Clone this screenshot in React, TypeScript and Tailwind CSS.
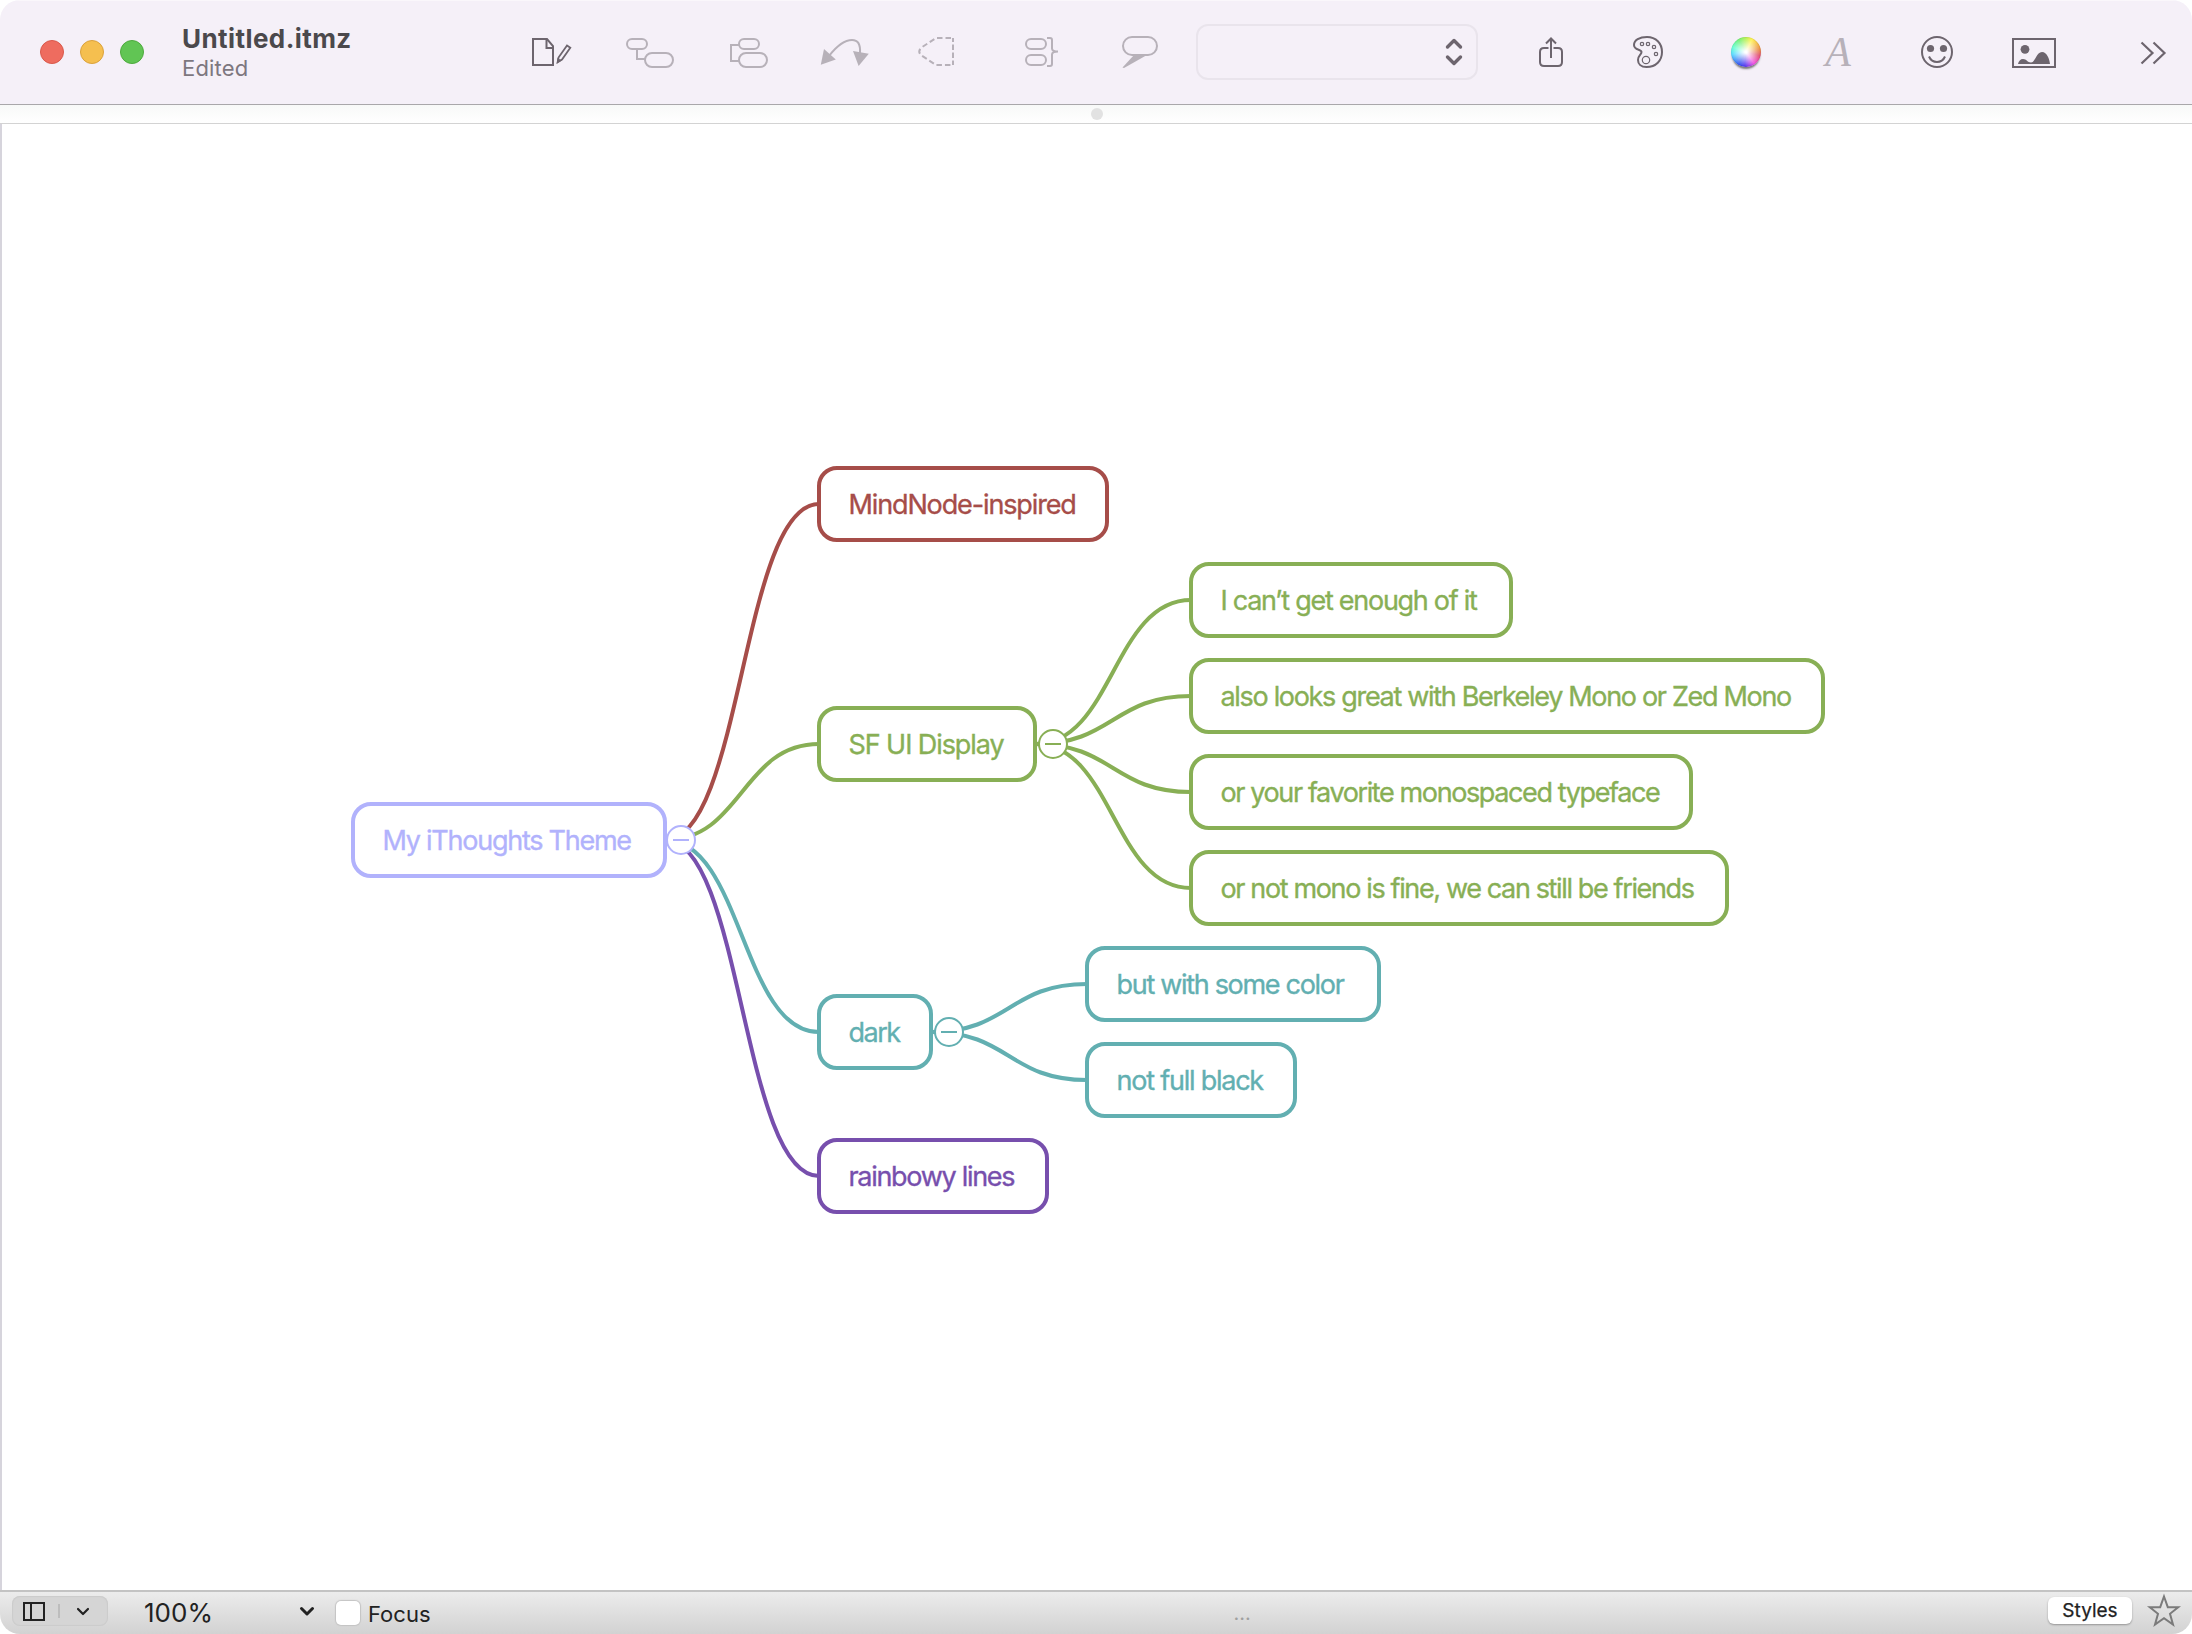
import type { ReactNode } from "react";

const STRONG = "#6d656e";
const FAINT = "#b7b1b9";

/* Mind map data; coordinates are relative to the canvas */

type MapNode = {
  label: string;
  x: number;
  y: number;
  width: number;
  color: string;
  tracking: string;
};

const LILAC = "#b1b2fc";
const RED = "#a64d49";
const GREEN = "#88af55";
const TEAL = "#62afb1";
const PURPLE = "#774fad";

const NODE_HEIGHT = 76;

const nodes: MapNode[] = [
  { label: "My iThoughts Theme", x: 351, y: 678, width: 316, color: LILAC, tracking: "tracking-[-1.25px]" },
  { label: "MindNode-inspired", x: 817, y: 342, width: 292, color: RED, tracking: "tracking-[-1.13px]" },
  { label: "SF UI Display", x: 817, y: 582, width: 220, color: GREEN, tracking: "tracking-[-1.08px]" },
  { label: "I can’t get enough of it", x: 1189, y: 438, width: 324, color: GREEN, tracking: "tracking-[-1.28px]" },
  { label: "also looks great with Berkeley Mono or Zed Mono", x: 1189, y: 534, width: 636, color: GREEN, tracking: "tracking-[-1.32px]" },
  { label: "or your favorite monospaced typeface", x: 1189, y: 630, width: 504, color: GREEN, tracking: "tracking-[-1.39px]" },
  { label: "or not mono is fine, we can still be friends", x: 1189, y: 726, width: 540, color: GREEN, tracking: "tracking-[-1.365px]" },
  { label: "dark", x: 817, y: 870, width: 116, color: TEAL, tracking: "tracking-[-1.5px]" },
  { label: "but with some color", x: 1085, y: 822, width: 296, color: TEAL, tracking: "tracking-[-1.31px]" },
  { label: "not full black", x: 1085, y: 918, width: 212, color: TEAL, tracking: "tracking-[-1.23px]" },
  { label: "rainbowy lines", x: 817, y: 1014, width: 232, color: PURPLE, tracking: "tracking-[-1.3px]" },
];

const links: [number, number][] = [
  [0, 10],
  [0, 7],
  [0, 2],
  [0, 1],
  [2, 3],
  [2, 4],
  [2, 5],
  [2, 6],
  [7, 8],
  [7, 9],
];

const toggles = [
  { x: 681, y: 716, color: LILAC },
  { x: 1053, y: 620, color: GREEN },
  { x: 949, y: 908, color: TEAL },
];

function linkPath(from: MapNode, to: MapNode) {
  const x1 = from.x + from.width - 2;
  const y1 = from.y + NODE_HEIGHT / 2;
  const x2 = to.x + 2;
  const y2 = to.y + NODE_HEIGHT / 2;
  const mid = (x1 + x2) / 2;
  return `M${x1} ${y1}C${mid} ${y1} ${mid} ${y2} ${x2} ${y2}`;
}

/* Toolbar */

function Tool({ label, x, width, children }: { label: string; x: number; width: number; children: ReactNode }) {
  return (
    <button aria-label={label} className="h-[104px] shrink-0">
      <svg width={width} height={104} viewBox={`${x} 0 ${width} 104`} fill="none" strokeWidth={2}>
        {children}
      </svg>
    </button>
  );
}

function TrafficLights() {
  return (
    <div className="flex gap-4 pl-10">
      <span className="size-6 rounded-full border border-[#d9594b] bg-[#ee6c5f]" />
      <span className="size-6 rounded-full border border-[#dba23c] bg-[#f5bf4f]" />
      <span className="size-6 rounded-full border border-[#4eaa3e] bg-[#61c554]" />
    </div>
  );
}

function Toolbar() {
  return (
    <header className="flex h-[104px] shrink-0 items-center overflow-hidden bg-[#f5f0f8] shadow-[inset_0_1px_0_#faf7fb]">
      <div className="flex w-[520px] shrink-0 items-center">
        <TrafficLights />
        <div className="pt-0.5 pl-[38px]">
          <div className="text-[26px] leading-[30px] font-bold tracking-[0.42px] text-[#4b494c]">Untitled.itmz</div>
          <div className="text-[22px] leading-[28px] tracking-[0.2px] text-[#7d777f]">Edited</div>
        </div>
      </div>

      <Tool label="Edit document" x={520} width={80}>
        <g stroke={STRONG}>
          <path d="M533 39H547L553 46V65H533Z" />
          <path d="M546.5 39V48H553" />
          <path d="M567 45.5L570.3 47.8L562 59.5L557.8 62L558.5 57.5Z" strokeWidth={1.8} />
        </g>
        <path d="M556.5 64L557.5 58L561.8 60.5Z" fill={STRONG} />
      </Tool>
      <Tool label="Add child" x={600} width={100}>
        <g stroke={FAINT}>
          <rect x={627} y={39} width={20} height={10} rx={5} />
          <rect x={645} y={53} width={28} height={14} rx={7} />
          <path d="M637 49V59H645" />
        </g>
      </Tool>
      <Tool label="Add sibling" x={700} width={100}>
        <g stroke={FAINT}>
          <rect x={739} y={39} width={20} height={10} rx={5} />
          <rect x={739} y={53} width={28} height={14} rx={7} />
          <path d="M739 45H731V61H739" />
        </g>
      </Tool>
      <Tool label="Add relationship" x={800} width={90}>
        <path d="M829 56C836 47 844 40 852 40C858 40 860.5 44 860 53" stroke={FAINT} />
        <path d="M820.8 64.8L824 49L835.8 59.5Z" fill={FAINT} />
        <path d="M858.6 66L853 51L868.8 53.8Z" fill={FAINT} />
      </Tool>
      <Tool label="Add boundary" x={890} width={100}>
        <path d="M953 65V38" stroke={FAINT} strokeDasharray="5.5 2.5" strokeDashoffset={1} />
        <path d="M953 38H936L921.5 47.5Q917 51.5 921.5 55.5L936 65H953" stroke={FAINT} strokeDasharray="5.5 3" strokeDashoffset={-2} />
      </Tool>
      <Tool label="Add summary" x={990} width={100}>
        <g stroke={FAINT}>
          <rect x={1026} y={39} width={20} height={10} rx={5} />
          <rect x={1026} y={55} width={20} height={10} rx={5} />
          <path d="M1047 38H1050Q1052 38 1052 40V48.5Q1052 51.5 1058 51.5Q1052 51.5 1052 54.5V64Q1052 66 1050 66H1047" />
        </g>
      </Tool>
      <Tool label="Add callout" x={1090} width={106}>
        <rect x={1123} y={37} width={34} height={18} rx={9} stroke={FAINT} />
        <path d="M1134 55H1147L1124 68L1122.5 67.5Z" fill={FAINT} />
      </Tool>

      <div className="flex h-14 w-[282px] shrink-0 items-center justify-end rounded-xl border-2 border-[#e9e4ec] pr-3">
        <svg width={20} height={32} viewBox="0 0 20 32" fill="none" stroke={STRONG} strokeWidth={3.4} strokeLinecap="round" strokeLinejoin="round">
          <path d="M3.5 11L10 4.5L16.5 11M3.5 21L10 27.5L16.5 21" />
        </svg>
      </div>

      <Tool label="Share" x={1478} width={122}>
        <g stroke={STRONG}>
          <path d="M1548.5 48H1544Q1540 48 1540 52V62Q1540 66 1544 66H1558Q1562 66 1562 62V52Q1562 48 1558 48H1553.5" />
          <path d="M1551 58V39M1546 43.5L1551 38.5L1556 43.5" />
        </g>
      </Tool>
      <Tool label="Palette" x={1600} width={100}>
        <path
          d="M1647 37C1656 37 1662 43.5 1662 52C1662 60.5 1656 67 1646.5 67C1641 67 1638 64 1638 60C1638 55.5 1641.5 54.8 1641.5 52C1641.5 49 1634 50.5 1634 45C1634 40 1639.5 37 1647 37Z"
          stroke={STRONG}
        />
        <g stroke={STRONG} strokeWidth={1.2}>
          <circle cx={1642} cy={44} r={1.7} />
          <circle cx={1648} cy={44} r={1.7} />
          <circle cx={1654} cy={47} r={1.7} />
          <circle cx={1656} cy={54} r={1.7} />
          <circle cx={1646} cy={60} r={3.7} />
        </g>
      </Tool>
      <button aria-label="Colors" className="flex w-[92px] shrink-0 justify-center">
        <span className="size-[30px] rounded-full bg-[radial-gradient(circle,#fff_5%,#ffffff00_70%),conic-gradient(#b4f04a,#fff04a_25deg,#e8843c_80deg,#e04a6c_105deg,#f04ae0_145deg,#4a30f0_185deg,#3050f0_210deg,#50d8ff_260deg,#60ffd0_290deg,#70f070_330deg,#b4f04a)] shadow-[0_3px_2px_-1px_#00000080,inset_0_0_1px_#00000050]" />
      </button>
      <button
        aria-label="Fonts"
        className="flex w-[88px] shrink-0 justify-center pl-1 font-['Liberation_Serif',serif] text-[42px] leading-[46px] text-[#b7b1b9] italic"
      >
        A
      </button>
      <Tool label="Emoji" x={1880} width={110}>
        <circle cx={1937} cy={52} r={15} stroke={STRONG} />
        <path d="M1929 56.5C1930.5 60 1933.5 62 1937 62C1940.5 62 1943.5 60 1945 56.5" stroke={STRONG} />
        <circle cx={1930.5} cy={48.5} r={3.6} fill={STRONG} />
        <circle cx={1943.5} cy={48.5} r={3.6} fill={STRONG} />
      </Tool>
      <Tool label="Image" x={1990} width={110}>
        <rect x={2013} y={39} width={42} height={28} stroke={STRONG} />
        <circle cx={2025} cy={49.3} r={4.4} fill={STRONG} />
        <path
          d="M2018 64C2018.5 61 2020.5 59 2023 59C2026.5 59 2027.5 62.5 2031 62.5C2035.5 62.5 2036 52 2042 52C2047 52 2049.5 59 2050 64Z"
          fill={STRONG}
        />
      </Tool>
      <Tool label="More" x={2100} width={92}>
        <path d="M2141.5 42.5L2152.5 53L2141.5 63.5M2153.5 42.5L2164.5 53L2153.5 63.5" stroke={STRONG} strokeWidth={2.2} />
      </Tool>
    </header>
  );
}

function TabStrip() {
  return (
    <div className="flex h-5 shrink-0 items-center justify-center border-t border-b border-t-[#a9a7aa] border-b-[#d3d3d3] bg-linear-to-b from-[#f8f9f8] to-white pl-0.5">
      <span className="size-3 rounded-full bg-[#e2e2e2]" />
    </div>
  );
}

/* Canvas */

function Canvas() {
  return (
    <main className="relative min-h-0 flex-1 overflow-hidden border-l-2 border-[#d6d4dc] bg-white">
      <div className="absolute inset-y-0 right-0 -left-0.5">
        <svg className="absolute inset-0 size-full" fill="none" strokeWidth={4}>
          {links.map(([from, to]) => (
            <path key={`${from}-${to}`} d={linkPath(nodes[from], nodes[to])} stroke={nodes[to].color} />
          ))}
        </svg>
        {nodes.map((node) => (
          <div
            key={node.label}
            className={`absolute flex h-[76px] items-center rounded-[20px] border-4 bg-white pl-[27.5px] text-[27px] leading-none whitespace-nowrap [-webkit-text-stroke:0.35px_currentColor] ${node.tracking}`}
            style={{ left: node.x, top: node.y, width: node.width, color: node.color, borderColor: node.color }}
          >
            {node.label}
          </div>
        ))}
        {toggles.map((toggle) => (
          <button
            key={toggle.x}
            aria-label="Collapse"
            className="absolute flex size-[30px] -translate-1/2 items-center justify-center rounded-full border-2 bg-white"
            style={{ left: toggle.x, top: toggle.y, color: toggle.color, borderColor: toggle.color }}
          >
            <span className="h-0.5 w-4 bg-current" />
          </button>
        ))}
      </div>
    </main>
  );
}

/* Status bar */

function StatusBar() {
  return (
    <footer className="flex h-11 shrink-0 items-center border-t-2 border-[#c3c3c3] bg-linear-to-b from-[#ececec] to-[#d2d2d2] text-[#222]">
      <div className="mb-1 ml-3 flex h-[30px] w-24 items-center rounded-lg bg-[#d5d5d5] shadow-[inset_0_0_1px_1px_#cbcbcb]">
        <svg width={96} height={30} viewBox="0 0 96 30" fill="none" stroke="#222" strokeWidth={2}>
          <path d="M12 7H32V24H12ZM19 7V24" />
          <path d="M47 8V22" stroke="#bdbdbd" />
          <path d="M66 13L71 18L76 13" strokeWidth={2.2} strokeLinecap="round" strokeLinejoin="round" />
        </svg>
      </div>
      <span className="ml-9 w-[155px] text-[26px] leading-none">100%</span>
      <svg className="mb-1" width={16} height={12} viewBox="0 0 16 12" fill="none" stroke="#222" strokeWidth={3} strokeLinecap="round" strokeLinejoin="round">
        <path d="M2.5 3.5L8 9L13.5 3.5" />
      </svg>
      <span className="ml-[21px] size-6 rounded-[5px] bg-white shadow-[0_0_1px_1px_#c4c4c4]" />
      <span className="ml-2 pt-0.5 text-[22px] leading-none">Focus</span>
      <span className="ml-[803px] text-[20px] leading-none text-[#a0a0a0]">...</span>
      <button className="mb-1.5 ml-auto h-[27px] w-[84px] rounded-md bg-white text-[19px] leading-none shadow-[0_1px_2px_#00000050] [-webkit-text-stroke:0.25px_currentColor]">
        Styles
      </button>
      <svg className="mr-2.5 mb-1.5 ml-[14px]" width={36} height={36} viewBox="0 0 36 36" fill="none" stroke="#7b7b7b" strokeWidth={2}>
        <path d="M18 4.5L21.8 15.2H32.2L24 21.8L27 32.5L18 26.2L9 32.5L12 21.8L3.8 15.2H14.2Z" />
      </svg>
    </footer>
  );
}

export default function App() {
  return (
    <div className="h-screen w-screen bg-white font-['Inter',sans-serif]">
      <div className="flex h-full flex-col overflow-hidden rounded-[20px]">
        <Toolbar />
        <TabStrip />
        <Canvas />
        <StatusBar />
      </div>
    </div>
  );
}
